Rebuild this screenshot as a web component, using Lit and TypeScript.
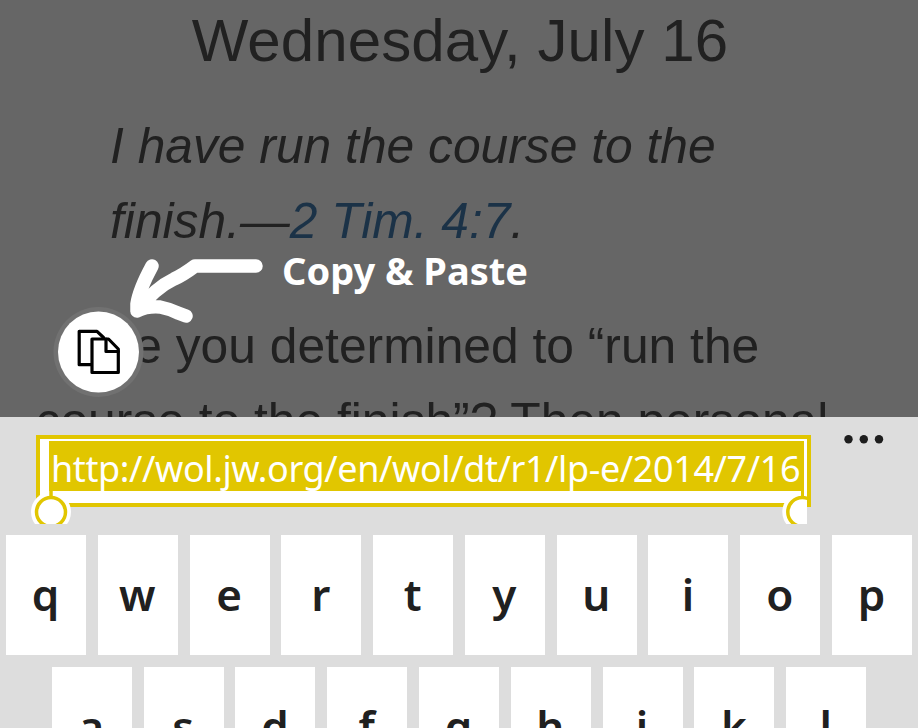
import { LitElement, html, css } from "lit";
import { customElement } from "lit/decorators.js";

@customElement("reading-page")
class ReadingPage extends LitElement {
  static styles = css`
    :host { display: block; flex: none; position: relative; height: 417.4px; overflow: hidden; background: #666; color: #212121;
      font-family: "Liberation Sans", Arial, sans-serif; font-size: 49.75px; line-height: 75px; white-space: nowrap; }
    .title { margin: 0; padding-top: 6px; font-size: 60px; letter-spacing: 0.1px; font-weight: 400; line-height: 70px; text-align: center; text-indent: 2px; }
    .verse { margin: 32.5px 0 0 110px; font-style: italic; }
    .ref { color: #1b3247; }
    .body { margin: 50px 0 0 35.5px; text-indent: 49px; }
    .art { position: absolute; left: 0; top: 0; }
    .note { position: absolute; left: 282px; top: 245px; margin: 0; color: #fff; font: 700 38px/50px "Noto Sans", sans-serif; }
  `;
  render() {
    return html`
      <h1 class="title">Wednesday, July 16</h1>
      <p class="verse">I have run the course to the<br />finish.—<span class="ref">2 Tim. 4:7</span>.</p>
      <p class="body">Are you determined to “run the<br />course to the finish”? Then personal</p>
      <svg class="art" width="280" height="418" viewBox="0 0 280 418" fill="none" stroke-linecap="round" stroke-linejoin="round">
        <circle cx="98.5" cy="352" r="45" fill="#717171" />
        <circle cx="98.5" cy="352" r="40.5" fill="#fff" />
        <g stroke="#000" stroke-width="3.2">
          <path d="M91 364.7H79.2V331.3H97L103.5 337.5" />
          <path d="M92 339H108.5L118.3 349V372.5H92Z" />
          <path d="M106 339V351.5H118.3" />
        </g>
        <path stroke="#fff" stroke-width="13.5" d="M256 266H195Q183 275 174 279Q155 288 137 311M152 266Q139 290 137 304V311Q147 306 160 307Q170 309 178 313L186 316" />
      </svg>
      <p class="note">Copy &amp; Paste</p>`;
  }
}

@customElement("url-field")
class UrlField extends LitElement {
  static styles = css`
    :host { display: block; position: relative; box-sizing: border-box; width: 775px; height: 72px; border: 4px solid #e1c600; background: #fff; }
    .selected { margin: 2px 3px 0 9px; height: 50px; padding-left: 2px; background: #e1c600; color: #fff;
      font: 400 36px/56px "Noto Sans", sans-serif; letter-spacing: -0.4px; white-space: nowrap; }
    .handles { position: absolute; left: -10px; top: 48px; }
  `;
  render() {
    return html`
      <div class="selected">http://wol.jw.org/en/wol/dt/r1/lp-e/2014/7/16</div>
      <svg class="handles" width="777" height="37.5" viewBox="30 487 777 37.5">
        <circle cx="51" cy="512" r="20" fill="#fff" />
        <circle cx="51" cy="512" r="14.5" fill="#fff" stroke="#e1c600" stroke-width="3.5" />
        <path d="M51 487V498" stroke="#e1c600" stroke-width="3.5" />
        <circle cx="802.3" cy="512" r="20" fill="#fff" />
        <circle cx="802.3" cy="512" r="14.5" fill="#fff" stroke="#e1c600" stroke-width="3.5" />
        <path d="M802.5 487V498" stroke="#e1c600" stroke-width="3" />
      </svg>`;
  }
}

@customElement("key-rows")
class KeyRows extends LitElement {
  static styles = css`
    :host { display: flex; flex: none; flex-direction: column; gap: 12px; color: #202020; font: 600 44px/118px "Noto Sans", sans-serif; }
    .row { display: flex; justify-content: center; gap: 11.8px; }
    .key { flex: none; box-sizing: border-box; padding-right: 1px; width: 80px; height: 120.5px; background: #fff; text-align: center; }
  `;
  render() {
    return ["qwertyuiop", "asdfghjkl"].map(
      (row) => html`<div class="row">${[...row].map((k) => html`<div class="key">${k}</div>`)}</div>`
    );
  }
}

@customElement("app-root")
class AppRoot extends LitElement {
  static styles = css`
    :host { display: flex; flex-direction: column; width: 918px; height: 728px; overflow: hidden; background: #ddd; }
    .bar { flex: none; display: flex; align-items: flex-start; padding: 17.6px 0 0 36px; height: 99.7px; }
    .more { display: block; margin-left: 30px; }
  `;
  render() {
    return html`
      <reading-page></reading-page>
      <div class="bar">
        <url-field></url-field>
        <svg class="more" width="48" height="12" viewBox="841 435 48 12" fill="#1d1d1d">
          <circle cx="848.5" cy="439.2" r="4.2" /><circle cx="863.8" cy="439.2" r="4.2" /><circle cx="879" cy="439.2" r="4.2" />
        </svg>
      </div>
      <key-rows></key-rows>`;
  }
}
